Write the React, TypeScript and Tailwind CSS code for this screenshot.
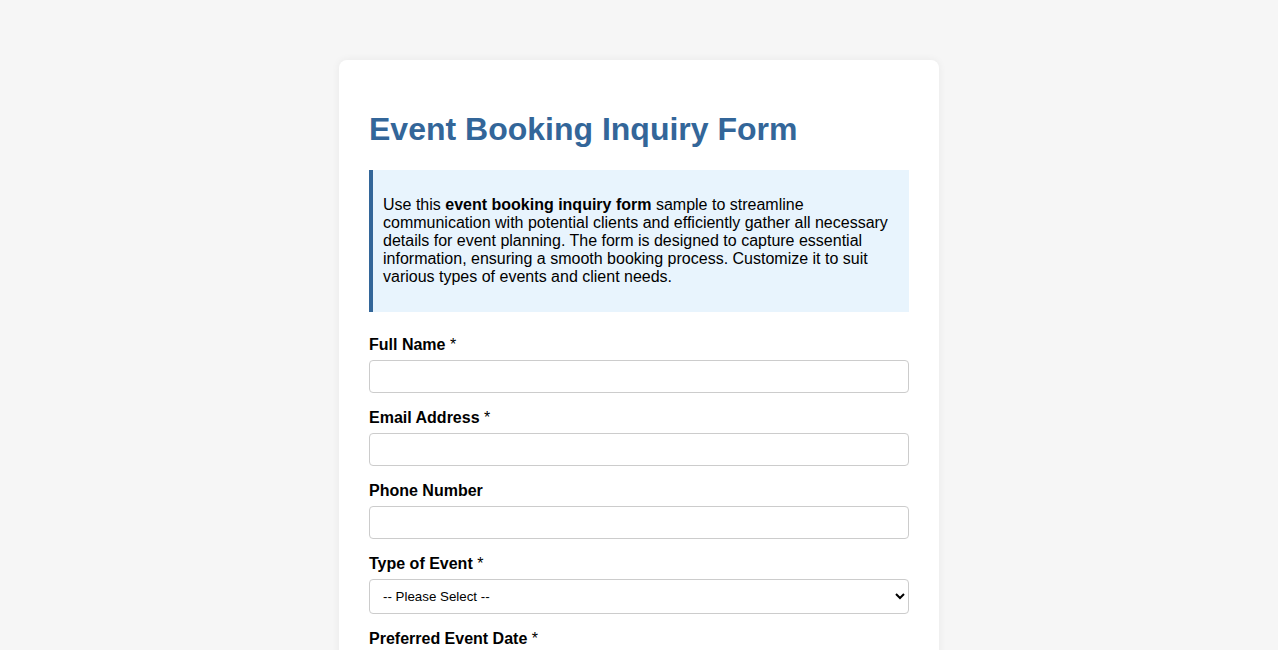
import React from 'react';

const fieldClass =
  'block w-full h-[33px] rounded-[4px] border border-[#cccccc] bg-white px-2 text-[13.33px] text-black';

function Label({ children, required }: { children: React.ReactNode; required?: boolean }) {
  return (
    <label className="block mb-[6px] text-[16px] leading-[18px] font-bold text-black">
      {children}
      {required && <span className="font-normal"> *</span>}
    </label>
  );
}

export default function App() {
  return (
    <div className="min-h-[650px] bg-[#f6f6f6] pt-[60px] font-['Liberation_Sans',Arial,sans-serif]">
      <div className="mx-auto w-[600px] rounded-t-[8px] bg-white px-[30px] pt-[30px] pb-[40px] shadow-[0_0_8px_rgba(0,0,0,0.06)]">
        <h1 className="mt-[21px] mb-[22px] text-[32px] leading-[37px] font-bold text-[#336699]">
          Event Booking Inquiry Form
        </h1>

        {/* intro note */}
        <div className="border-l-4 border-[#336699] bg-[#e8f4fd] pl-[10px] pr-[15px] py-[10px] mb-[24px]">
          <p className="my-4 text-[16px] leading-[18px] text-black">
            Use this <strong>event booking inquiry form</strong> sample to streamline communication with
            potential clients and efficiently gather all necessary details for event planning. The form is
            designed to capture essential information, ensuring a smooth booking process. Customize it to
            suit various types of events and client needs.
          </p>
        </div>

        <form className="flex flex-col gap-4">
          <div>
            <Label required>Full Name</Label>
            <input type="text" className={fieldClass} />
          </div>
          <div>
            <Label required>Email Address</Label>
            <input type="email" className={fieldClass} />
          </div>
          <div>
            <Label>Phone Number</Label>
            <input type="tel" className={fieldClass} />
          </div>
          <div>
            <Label required>Type of Event</Label>
            <select
              defaultValue=""
              className="block w-full h-[35px] rounded-[4px] border border-[#cccccc] bg-white pl-[9px] pr-1 text-[13.33px] text-black"
            >
              <option value="">-- Please Select --</option>
              <option>Wedding</option>
              <option>Corporate Event</option>
              <option>Birthday Party</option>
              <option>Other</option>
            </select>
          </div>
          <div>
            <Label required>Preferred Event Date</Label>
            <input type="date" className={fieldClass} />
          </div>
        </form>
      </div>
    </div>
  );
}
